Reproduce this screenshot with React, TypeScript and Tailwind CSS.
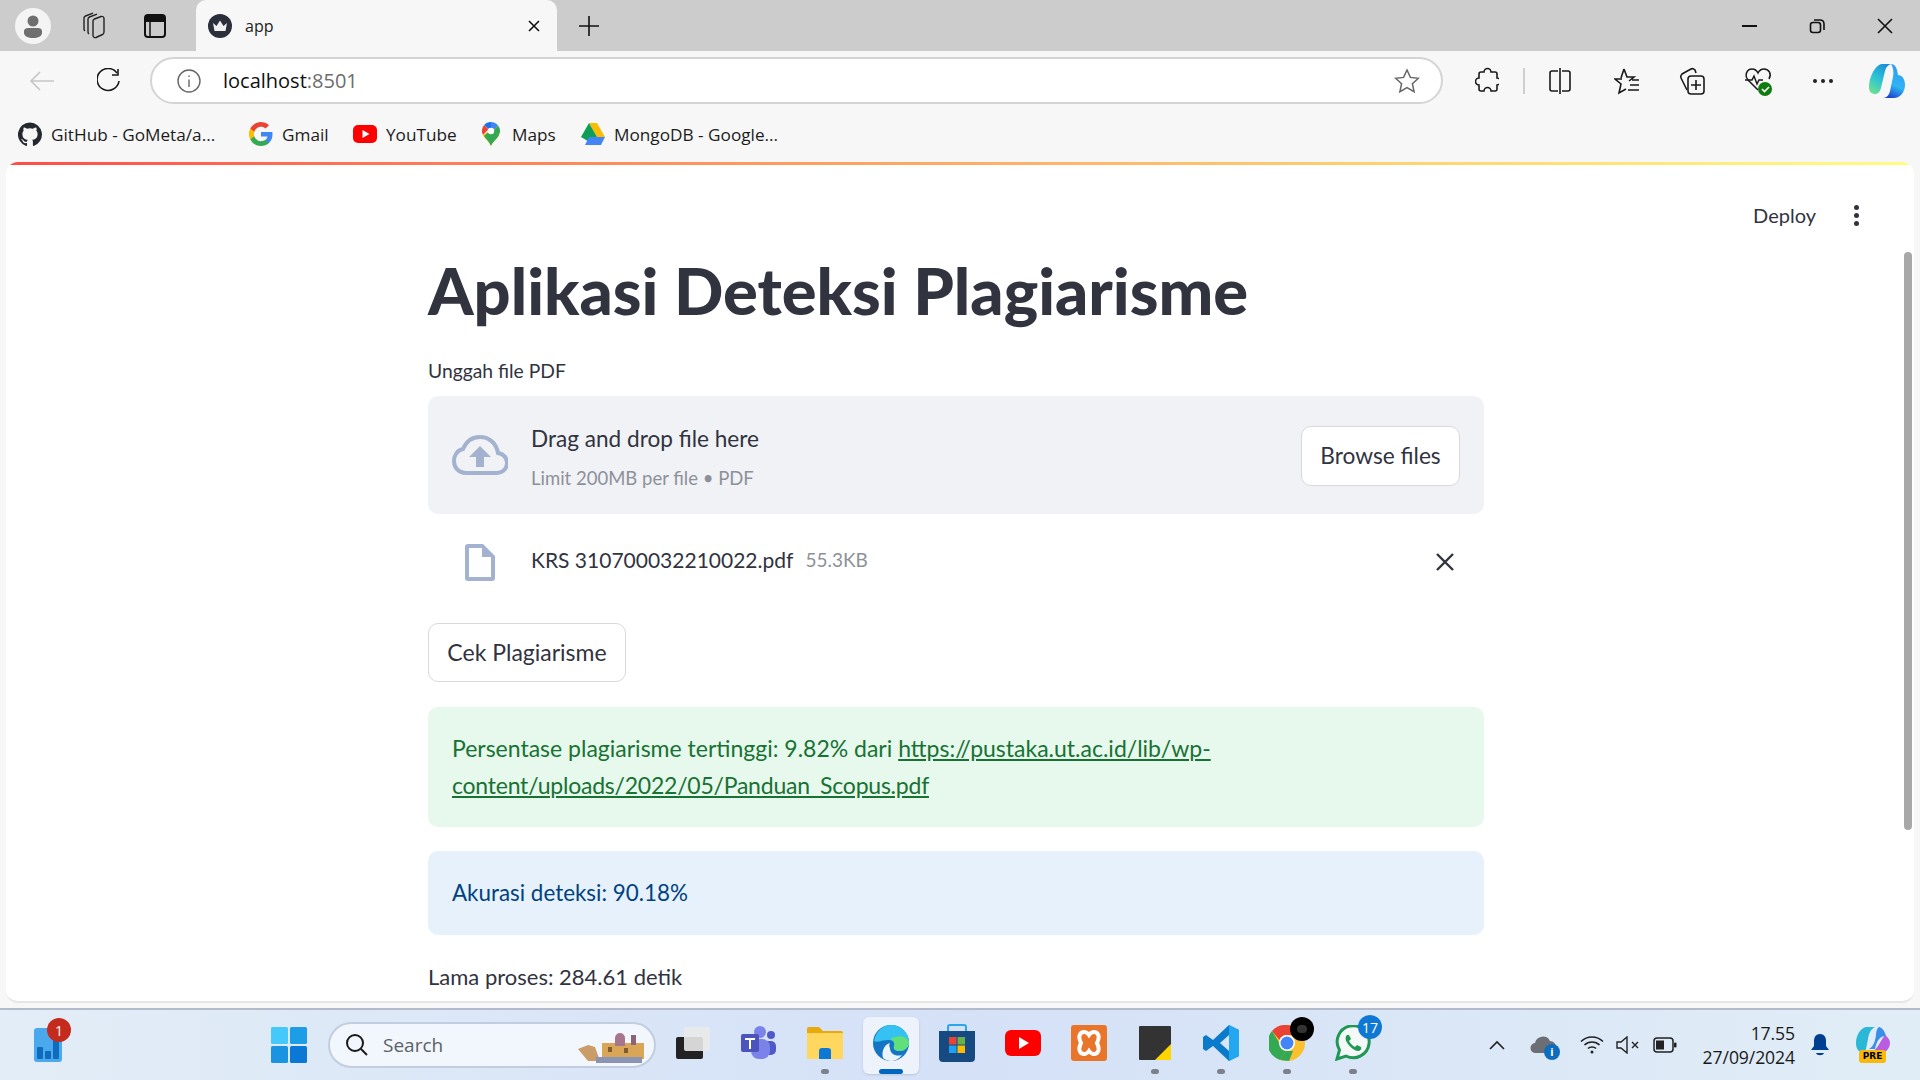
import type { ReactNode } from 'react';

const ui = "font-['Open_Sans','Noto_Sans',sans-serif]";
const st = "font-['Lato','Noto_Sans',sans-serif]";

function Slot({ w, className = '', children }: { w: string; className?: string; children: ReactNode }) {
  return <div className={`flex shrink-0 items-center justify-center ${w} ${className}`}>{children}</div>;
}

function TabStrip() {
  return (
    <div className="flex h-[51px] shrink-0 items-center bg-[#cccccc]">
      <Slot w="w-[66px]">
        <div className="flex h-9 w-9 items-center justify-center rounded-full bg-[#f4f4f4]">
          <svg width="22" height="26" viewBox="0 0 22 26" fill="#6f6f6f">
            <circle cx="11" cy="8" r="5.5" />
            <path d="M2 18c0-2 2-3 4-3h10c2 0 4 1 4 3v2c0 3-4 5-9 5s-9-2-9-5z" />
          </svg>
        </div>
      </Slot>
      <Slot w="w-[62px]" className="-ml-[4px]">
        <svg width="26" height="28" viewBox="0 0 26 28" fill="none" stroke="#222" strokeWidth="1.4">
          <path d="M13 9c0-1 .5-1.500 1.500-2L21 4.500c1.500-.5 3 .5 3 2V20c0 1-.5 2-1.500 2.500L16 25.500c-1.500.5-3-.5-3-2z" />
          <path d="M9 22c-.7-.5-1-1.200-1-2V7c0-1 .5-1.500 1.500-2L17 2.200" />
          <path d="M5 19c-.7-.5-1-1.200-1-2V6c0-1 .5-1.500 1.500-2L13 1.200" />
        </svg>
      </Slot>
      <Slot w="w-[62px]">
        <svg width="24" height="26" viewBox="0 0 24 26" fill="none">
          <rect x="2" y="2" width="20" height="22" rx="3" stroke="#111" strokeWidth="2" />
          <path d="M2 5a3 3 0 013-3h14a3 3 0 013 3v4H2z" fill="#111" />
          <path d="M7 9v15" stroke="#111" strokeWidth="1.5" />
        </svg>
      </Slot>
      <div className="ml-[10px] flex h-full w-[361px] shrink-0 items-center rounded-t-[10px] bg-[#f7f7f7] pl-[12px]">
        <svg width="24" height="24" viewBox="0 0 24 24">
          <circle cx="12" cy="12" r="12" fill="#2b2f3b" />
          <path d="M5 9l3.5 3L12 6.5l3.5 5.500L19 9l-1.500 8h-11z" fill="#f0f0f0" />
        </svg>
        <span className={`${ui} ml-[13px] text-[16px] text-[#222]`}>app</span>
        <svg className="ml-auto mr-[16px]" width="14" height="14" viewBox="0 0 14 14" stroke="#111" strokeWidth="1.6">
          <path d="M2 2l10 10M12 2L2 12" />
        </svg>
      </div>
      <Slot w="w-[66px]" className="-ml-[1px]">
        <svg width="22" height="22" viewBox="0 0 22 22" stroke="#111" strokeWidth="1.6">
          <path d="M11 1v20M1 11h20" />
        </svg>
      </Slot>
      <div className="ml-auto flex items-center">
        <Slot w="w-[68px]">
          <div className="h-[2px] w-[15px] bg-[#111]" />
        </Slot>
        <Slot w="w-[68px]">
          <svg width="16" height="16" viewBox="0 0 16 16" fill="none" stroke="#111" strokeWidth="1.6">
            <rect x="1.500" y="4.500" width="10" height="10" rx="2.500" />
            <path d="M5 2h6c2.500 0 4 1.500 4 4v6" />
          </svg>
        </Slot>
        <Slot w="w-[68px]" className="mr-[1px]">
          <svg width="16" height="16" viewBox="0 0 16 16" stroke="#111" strokeWidth="1.6">
            <path d="M1 1l14 14M15 1L1 15" />
          </svg>
        </Slot>
      </div>
    </div>
  );
}

function CopilotMark() {
  return (
    <svg width="36" height="34" viewBox="0 0 36 34">
      <defs>
        <linearGradient id="copL" x1="0.700" y1="0" x2="0.200" y2="1">
          <stop offset="0" stopColor="#1b8fd8" />
          <stop offset="0.500" stopColor="#2cc3d6" />
          <stop offset="1" stopColor="#6ee08f" />
        </linearGradient>
        <linearGradient id="copR" x1="0.600" y1="0" x2="0.300" y2="1">
          <stop offset="0" stopColor="#2f9cf0" />
          <stop offset="0.600" stopColor="#30b4f2" />
          <stop offset="1" stopColor="#1a3fd0" />
        </linearGradient>
      </defs>
      <path d="M10 1c1-.7 2-1 3-1h9c-3 1-5 3-6 7l-4 17c-1 4-3 6-6 6-3.500 0-6-2-6-7 0-8 4-18 10-22z" fill="url(#copL)" />
      <path d="M22 0c3 0 5 2 6 6l1 5c4 0 7 4 7 10 0 7-5 13-11 13H14c4 0 6-3 7-7l3-14c1-5 0-10-2-13z" fill="url(#copR)" />
    </svg>
  );
}

function Toolbar() {
  const black = { fill: 'none', stroke: '#1a1a1a', strokeWidth: 1.6 };
  return (
    <div className="flex h-[56px] shrink-0 items-center bg-[#f7f7f7] pt-[3px]">
      <Slot w="w-[84px]">
        <svg width="26" height="22" viewBox="0 0 26 22" fill="none" stroke="#c6c6c6" strokeWidth="1.6">
          <path d="M25 11H2M11 2l-9 9 9 9" />
        </svg>
      </Slot>
      <Slot w="w-[48px]" className="pl-[4px]">
        <svg width="26" height="26" viewBox="0 0 26 26" {...black}>
          <path d="M20 5a11 11 0 102 8" />
          <path d="M21 1v6h-6" />
        </svg>
      </Slot>
      <div className="ml-[18px] flex h-[47px] w-[1293px] shrink-0 items-center rounded-full border-2 border-[#d4d4d4] bg-white pl-[25px]">
        <svg width="24" height="24" viewBox="0 0 24 24" fill="none" stroke="#666" strokeWidth="1.4">
          <circle cx="12" cy="12" r="11" />
          <path d="M12 10.500V18M12 6.500v1.500" />
        </svg>
        <span className={`${ui} ml-[22px] text-[20px] text-[#111]`}>
          localhost<span className="text-[#6d6d6d]">:8501</span>
        </span>
        <svg className="ml-auto mr-[21px]" width="26" height="26" viewBox="0 0 26 26" fill="none" stroke="#666" strokeWidth="1.5">
          <path d="M13 2l3.400 7.400 8 .9-6 5.400 1.700 8L13 19.700 5.900 23.700l1.700-8-6-5.400 8-.9z" />
        </svg>
      </div>
      <Slot w="w-[88px]">
        <svg width="24" height="28" viewBox="0 0 24 28" {...black}>
          <path d="M9 5a3.500 3.500 0 017 0h4c1 0 2 1 2 2v4a3.500 3.500 0 010 7v4c0 1-1 2-2 2h-4a3.500 3.500 0 00-7 0H6c-1 0-2-1-2-2v-4a3.500 3.500 0 010-7V7c0-1 1-2 2-2z" />
        </svg>
      </Slot>
      <div className="-ml-[8px] h-[26px] w-[2px] bg-[#cfcfcf]" />
      <Slot w="w-[70px]">
        <svg width="24" height="28" viewBox="0 0 24 28" {...black}>
          <path d="M10 4H4a2 2 0 00-2 2v16a2 2 0 002 2h6M14 4h6a2 2 0 012 2v16a2 2 0 01-2 2h-6M12 1v26" />
        </svg>
      </Slot>
      <Slot w="w-[64px]">
        <svg width="26" height="28" viewBox="0 0 26 28" {...black}>
          <path d="M10 2l3 8h7l-5 4M8 12H1l6 5-2 9 7-4M18 13h7M16 18h9M14 23h11" />
          <path d="M10 2L7 11" />
        </svg>
      </Slot>
      <Slot w="w-[66px]">
        <svg width="26" height="30" viewBox="0 0 26 30" {...black}>
          <rect x="9" y="10" width="16" height="18" rx="3" />
          <path d="M17 14v10M12 19h10M8 24L2 12c-1-2 0-3 1-4l9-5c2-1 3 0 4 1l1 3" />
        </svg>
      </Slot>
      <Slot w="w-[66px]" className="pl-[1px]">
        <svg width="30" height="30" viewBox="0 0 30 30">
          <path d="M14 24L4 14C0 9 3 3 8 3c3 0 5 2 6 4 1-2 3-4 6-4 5 0 8 5 5 10" fill="none" stroke="#1a1a1a" strokeWidth="1.500" />
          <path d="M1 14h7l2-4 3 8 2-4h4" fill="none" stroke="#1a1a1a" strokeWidth="1.500" />
          <circle cx="21" cy="23" r="7" fill="#107c10" />
          <path d="M18 23l2.500 2.500L25 21" fill="none" stroke="#fff" strokeWidth="1.600" />
        </svg>
      </Slot>
      <Slot w="w-[64px]">
        <div className="flex gap-[4px]">
          <div className="h-[4px] w-[4px] rounded-full bg-[#222]" />
          <div className="h-[4px] w-[4px] rounded-full bg-[#222]" />
          <div className="h-[4px] w-[4px] rounded-full bg-[#222]" />
        </div>
      </Slot>
      <Slot w="w-[64px]">
        <CopilotMark />
      </Slot>
    </div>
  );
}

function Bookmark({ icon, label, className, gap = 'ml-[9px]' }: { icon: ReactNode; label: string; className: string; gap?: string }) {
  return (
    <div className={`flex shrink-0 items-center ${className}`}>
      {icon}
      <span className={`${ui} ${gap} whitespace-nowrap text-[17.200px] text-[#1c1c1c]`}>{label}</span>
    </div>
  );
}

function BookmarksBar() {
  return (
    <div className="flex h-[55px] shrink-0 items-center bg-[#f7f7f7] pl-[18px]">
      <Bookmark
        className="w-[231px]"
        label="GitHub - GoMeta/a..."
        icon={
          <svg width="24" height="24" viewBox="0 0 24 24" fill="#24292f">
            <path d="M12 .5a12 12 0 00-3.800 23.400c.6.1.8-.3.8-.6v-2.200c-3.300.7-4-1.400-4-1.400-.5-1.400-1.300-1.800-1.300-1.800-1.100-.7.1-.7.1-.7 1.200.1 1.800 1.200 1.800 1.200 1.100 1.800 2.800 1.300 3.500 1 .1-.8.4-1.300.8-1.600-2.700-.3-5.500-1.300-5.500-5.900 0-1.300.5-2.400 1.200-3.200-.1-.3-.5-1.500.1-3.200 0 0 1-.3 3.300 1.200a11.500 11.500 0 016 0c2.300-1.500 3.300-1.200 3.300-1.200.6 1.700.2 2.900.1 3.200.8.800 1.200 1.900 1.200 3.200 0 4.600-2.800 5.600-5.500 5.900.4.400.8 1.100.8 2.200v3.300c0 .3.2.7.8.6A12 12 0 0012 .5z" />
          </svg>
        }
      />
      <Bookmark
        className="w-[104px]"
        label="Gmail"
        icon={
          <svg width="24" height="24" viewBox="0 0 24 24">
            <path d="M23.500 12.300c0-.8-.1-1.600-.2-2.300H12v4.500h6.500a5.500 5.500 0 01-2.400 3.600v3h3.900c2.200-2.100 3.500-5.100 3.500-8.800z" fill="#4285f4" />
            <path d="M12 24c3.200 0 6-1.100 8-2.900l-3.900-3c-1.100.7-2.500 1.200-4.100 1.200-3.100 0-5.800-2.100-6.700-5H1.300v3.100A12 12 0 0012 24z" fill="#34a853" />
            <path d="M5.300 14.300a7 7 0 010-4.600V6.600h-4a12 12 0 000 10.800z" fill="#fbbc05" />
            <path d="M12 4.800c1.800 0 3.300.6 4.600 1.800l3.400-3.400A12 12 0 001.300 6.600l4 3.100c.9-2.800 3.600-4.900 6.700-4.900z" fill="#ea4335" />
          </svg>
        }
      />
      <Bookmark
        className="w-[126px]"
        label="YouTube"
        icon={
          <svg width="24" height="18" viewBox="0 0 24 18">
            <rect width="24" height="18" rx="5" fill="#ff0000" />
            <path d="M9.500 5v8l7-4z" fill="#fff" />
          </svg>
        }
      />
      <Bookmark
        className="w-[102px] pl-[3px]"
        gap="ml-[12px]"
        label="Maps"
        icon={
          <svg width="18" height="24" viewBox="0 0 18 24">
            <path d="M9 0a9 9 0 00-7 3.300l4.600 3.800A3.200 3.200 0 019 6z" fill="#1a73e8" />
            <path d="M2 3.300A9 9 0 001 13l5.500-5.700z" fill="#ea4335" />
            <path d="M9 0c3 0 5.500 1.500 7 3.500L12 8a3.200 3.200 0 00-3-2z" fill="#4285f4" />
            <path d="M16 3.500A9 9 0 0117 13l-11 0 6-5z" fill="#34a853" />
            <path d="M1 13c2 4 6 6 8 11 2-5 6-7 8-11-2-2-9-3-11-3z" fill="#fbbc04" />
            <path d="M9 24c-2-5-5-7-7-10l7-6 8 5c-2 4-6 6-8 11z" fill="#34a853" />
            <circle cx="9" cy="9" r="3.200" fill="#fff" />
          </svg>
        }
      />
      <Bookmark
        className="pl-[0px]"
        label="MongoDB - Google..."
        icon={
          <svg width="24" height="22" viewBox="0 0 24 22">
            <path d="M8 0h8l8 14h-8z" fill="#fbbc04" />
            <path d="M8 0l8 14-4 7L0 14z" fill="#0f9d58" />
            <path d="M8 14h16l-4 8H4z" fill="#4285f4" />
          </svg>
        }
      />
    </div>
  );
}

function Card() {
  return (
    <div className="relative mx-[6px] h-[841px] shrink-0 overflow-hidden rounded-[12px] border-b-2 border-[#e6e6e6] bg-white">
      <div className="h-[3px] bg-gradient-to-r from-[#ff4b4b] to-[#fffd80]" />
      <div className="flex h-[75px] items-end justify-end pb-[9px] pr-[55px]">
        <span className={`${st} text-[20px] leading-[32px] text-[#31333f]`}>Deploy</span>
        <div className="ml-[38px] flex h-[32px] flex-col items-center justify-center gap-[3px]">
          <div className="h-[5px] w-[5px] rounded-full bg-[#31333f]" />
          <div className="h-[5px] w-[5px] rounded-full bg-[#31333f]" />
          <div className="h-[5px] w-[5px] rounded-full bg-[#31333f]" />
        </div>
      </div>
      <div className={`${st} ml-[422px] w-[1056px] text-[#31333f]`}>
        <h1 className="mt-[12px] h-[76px] whitespace-nowrap text-[65px] font-black leading-[76px]">Aplikasi Deteksi Plagiarisme</h1>
        <div className="mt-[31px] text-[19.300px] leading-[24px]">Unggah file PDF</div>
        <div className="mt-[13px] flex h-[118px] items-center rounded-[10px] bg-[#f0f2f6] pl-[24px] pr-[24px]">
          <svg width="56" height="42" viewBox="0 0 56 42" fill="none">
            <path d="M14 39h30a10 10 0 002-20C44 8 36 3 28 3 20 3 14 8 11 15 5 16 2 22 2 27c0 7 5 12 12 12z" stroke="#a3b2cf" strokeWidth="4" />
            <path d="M28 12l-11 11h7v10h8V23h7z" fill="#a3b2cf" />
          </svg>
          <div className="ml-[23px]">
            <div className="text-[22.600px] leading-[38px]">Drag and drop file here</div>
            <div className="mt-[8px] text-[18.500px] leading-[24px] text-[#8e9099]">Limit 200MB per file • PDF</div>
          </div>
          <button className="ml-auto mt-[2px] h-[60px] w-[159px] rounded-[10px] border border-[#d8d9dc] bg-white text-[22.700px]">Browse files</button>
        </div>
        <div className="mt-[16px] flex h-[64px] items-center pl-[37px]">
          <svg width="30" height="37" viewBox="0 0 30 37">
            <path d="M3 0h15l12 12v22a3 3 0 01-3 3H3a3 3 0 01-3-3V3a3 3 0 013-3z" fill="#a3b2cf" />
            <path d="M4 4h13v9h9v20H4z" fill="#fff" />
          </svg>
          <span className="ml-[36px] -mt-[4px] text-[21px]">KRS 310700032210022.pdf</span>
          <span className="ml-[12px] -mt-[4px] text-[19px] text-[#8e9099]">55.3KB</span>
          <svg className="ml-auto mr-[30px]" width="18" height="18" viewBox="0 0 18 18" stroke="#31333f" strokeWidth="2.400">
            <path d="M1 1l16 16M17 1L1 17" />
          </svg>
        </div>
        <button className="mt-[29px] block h-[59px] w-[198px] rounded-[10px] border border-[#d8d9dc] bg-white text-[23px]">Cek Plagiarisme</button>
        <div className="mt-[25px] h-[120px] whitespace-nowrap rounded-[10px] bg-[#e7f8ed] px-[24px] py-[23px] text-[23px] leading-[37px] text-[#177233]">
          Persentase plagiarisme tertinggi: 9.82% dari <a className="underline">https://pustaka.ut.ac.id/lib/wp-<br /><span className="tracking-[-0.23px]">content/uploads/2022/05/Panduan_Scopus.pdf</span></a>
        </div>
        <div className="mt-[24px] flex h-[84px] items-center rounded-[10px] bg-[#e7f1fc] px-[24px] text-[22.400px] text-[#004280]">Akurasi deteksi: 90.18%</div>
        <div className="mt-[24px] text-[22px] leading-[36px]">Lama proses: 284.61 detik</div>
      </div>
      <div className="absolute right-[2px] top-[90px] h-[578px] w-[8px] rounded-full bg-[#a8a8a8]" />
    </div>
  );
}

function TaskIcon({ children, dot, active }: { children: ReactNode; dot?: boolean; active?: boolean }) {
  return (
    <div className={`relative mx-[5px] flex h-[57px] w-[56px] shrink-0 items-center justify-center rounded-[6px] pb-[4px] ${active ? 'bg-[#eef3fb] shadow-sm' : ''}`}>
      {children}
      {dot && <div className="absolute bottom-[0px] left-[24px] h-[5px] w-[8px] rounded-full bg-[#7a808c]" />}
      {active && <div className="absolute bottom-[0px] left-[16px] h-[5px] w-[24px] rounded-full bg-[#0067c0]" />}
    </div>
  );
}

function Badge({ children, className }: { children: ReactNode; className: string }) {
  return (
    <div className={`absolute flex items-center justify-center rounded-full text-white ${ui} ${className}`}>{children}</div>
  );
}

function Taskbar() {
  return (
    <div className="mt-[5px] flex h-[72px] flex-1 items-center border-t-2 border-[#b3bbca] bg-gradient-to-r from-[#e3edf7] via-[#d4e1f7] to-[#e1edf6]">
      {/* widgets */}
      <div className="relative ml-[34px] flex h-[34px] w-[28px] items-end justify-center gap-[2px] rounded-[3px] bg-[#4aa8ec] pb-[3px]">
        <div className="h-[12px] w-[6px] rounded-[1px] bg-[#0f6cbd]" />
        <div className="h-[8px] w-[6px] rounded-[1px] bg-[#0f6cbd]" />
        <div className="h-[20px] w-[6px] rounded-[1px] bg-[#0f6cbd]" />
        <Badge className="-right-[9px] -top-[10px] h-[24px] w-[24px] bg-[#c42b1c] text-[14px]">1</Badge>
      </div>
      {/* start */}
      <svg className="ml-[209px]" width="36" height="36" viewBox="0 0 36 36">
        <rect width="17" height="17" rx="1.500" fill="#45c8fa" />
        <rect x="19" width="17" height="17" rx="1.500" fill="#1d9de6" />
        <rect y="19" width="17" height="17" rx="1.500" fill="#1a94e0" />
        <rect x="19" y="19" width="17" height="17" rx="1.500" fill="#0a78d4" />
      </svg>
      {/* search */}
      <div className="relative ml-[21px] flex h-[46px] w-[328px] shrink-0 items-center rounded-full border-2 border-[#c2cde0] bg-[#f2f6fd] pl-[15px]">
        <svg width="24" height="24" viewBox="0 0 24 24" fill="none" stroke="#1a1a1a" strokeWidth="2">
          <circle cx="10" cy="10" r="8" />
          <path d="M16 16l6 6" />
        </svg>
        <span className={`${ui} ml-[14px] text-[19px] text-[#5d6168]`}>Search</span>
        <svg className="ml-auto mr-[2px]" width="76" height="36" viewBox="0 0 76 36">
          <path d="M2 22l10-4 7 2 5 14H12z" fill="#c99c68" />
          <rect x="26" y="16" width="42" height="16" fill="#d9a657" />
          <rect x="20" y="30" width="46" height="6" fill="#8c94b4" />
          <circle cx="44" cy="11" r="5" fill="#a8758f" />
          <rect x="39" y="11" width="10" height="8" fill="#a8758f" />
          <rect x="55" y="8" width="5" height="10" fill="#8a6478" />
          <rect x="32" y="20" width="4" height="5" fill="#7f5a33" />
          <rect x="48" y="21" width="4" height="5" fill="#7f5a33" />
        </svg>
      </div>
      {/* pinned */}
      <div className="ml-[4px] flex items-center">
        <TaskIcon>
          <svg width="38" height="36" viewBox="0 0 38 36">
            <rect x="2" y="12" width="27" height="22" rx="2" fill="#222" />
            <rect x="10" y="2" width="26" height="24" rx="2" fill="#e9e9e9" opacity="0.9" />
          </svg>
        </TaskIcon>
        <TaskIcon>
          <svg width="38" height="36" viewBox="0 0 38 36">
            <circle cx="31" cy="10" r="4" fill="#5059c9" />
            <rect x="24" y="16" width="12" height="14" rx="5" fill="#5059c9" />
            <circle cx="20" cy="7" r="6" fill="#7b83eb" />
            <rect x="11" y="14" width="19" height="20" rx="8" fill="#7b83eb" />
            <rect x="1" y="9" width="18" height="18" rx="2" fill="#4b53bc" />
            <path d="M5 13h10v2h-4v9H9v-9H5z" fill="#fff" />
          </svg>
        </TaskIcon>
        <TaskIcon dot>
          <svg width="36" height="32" viewBox="0 0 36 32">
            <path d="M0 2a2 2 0 012-2h10l4 4h18a2 2 0 012 2v24H0z" fill="#e8a90c" />
            <path d="M0 6h36v26H0z" fill="#ffd75e" />
            <path d="M12 32v-8a3 3 0 013-3h6a3 3 0 013 3v8z" fill="#0f78d4" />
          </svg>
        </TaskIcon>
        <TaskIcon active>
          <svg width="38" height="38" viewBox="0 0 38 38">
            <circle cx="19" cy="19" r="18" fill="#1475c4" />
            <path d="M2 17C4 7 11 1 19 1c10 0 18 8 18 17 0 6-5 9-9 9-5 0-7-2-6-5 1-2 0-6-5-6-7 0-12 3-15 1z" fill="#35c1f1" />
            <path d="M37 18c0 6-5 9-9 9-5 0-7-2-6-5 1-2 0-6-4-7 9-5 17-3 19 3z" fill="#5fe07b" />
            <path d="M18 24c0 6 6 9 12 7-3 4-7 6-11 6-3 0-6-1-8-3-2-7 2-14 7-15-1 2-1 3 0 5z" fill="#eaf4fb" />
          </svg>
        </TaskIcon>
        <TaskIcon>
          <svg width="36" height="38" viewBox="0 0 36 38">
            <path d="M9 8V3a2 2 0 012-2h14a2 2 0 012 2v5" fill="none" stroke="#28a8ea" strokeWidth="2" />
            <path d="M0 7h36v27a4 4 0 01-4 4H4a4 4 0 01-4-4z" fill="#164a80" />
            <rect x="10" y="13" width="7.500" height="7.500" fill="#ea4335" />
            <rect x="18.500" y="13" width="7.500" height="7.500" fill="#6ab04c" />
            <rect x="10" y="21.500" width="7.500" height="7.500" fill="#1da1f2" />
            <rect x="18.500" y="21.500" width="7.500" height="7.500" fill="#fbbc04" />
          </svg>
        </TaskIcon>
        <TaskIcon>
          <svg width="36" height="26" viewBox="0 0 36 26">
            <rect width="36" height="26" rx="6" fill="#ff0000" />
            <path d="M14 7v12l10-6z" fill="#fff" />
          </svg>
        </TaskIcon>
        <TaskIcon>
          <svg width="36" height="36" viewBox="0 0 36 36">
            <rect width="36" height="36" rx="3" fill="#e8752a" />
            <path d="M10 8c3-2 6-1 8 2 2-3 5-4 8-2 3 3 2 6 0 10 2 4 3 7 0 10-3 2-6 1-8-2-2 3-5 4-8 2-3-3-2-6 0-10-2-4-3-7 0-10z" fill="none" stroke="#fff" strokeWidth="4" />
          </svg>
        </TaskIcon>
        <TaskIcon dot>
          <svg width="32" height="34" viewBox="0 0 32 34">
            <rect width="32" height="34" rx="1" fill="#333" />
            <path d="M32 18L16 34h16z" fill="#ffd500" />
          </svg>
        </TaskIcon>
        <TaskIcon dot>
          <svg width="36" height="36" viewBox="0 0 36 36">
            <path d="M26 0l10 5v26l-10 5L10 21l-7 5-3-2V12l3-2 7 5zm0 10l-9 8 9 8z" fill="#0a7acb" />
            <path d="M26 0l10 5v26l-10 5z" fill="#22a7f0" />
          </svg>
        </TaskIcon>
        <TaskIcon dot>
          <div className="relative">
            <svg width="36" height="36" viewBox="0 0 36 36">
              <circle cx="18" cy="18" r="18" fill="#fbc02d" />
              <path d="M18 0a18 18 0 0116 10H18a8 8 0 00-7.500 5L3 6A18 18 0 0118 0z" fill="#ea4335" />
              <path d="M3 6l8 13 6 7-6 9A18 18 0 013 6z" fill="#34a853" />
              <path d="M11 35l6-9h7l-4 10z" fill="#34a853" />
              <circle cx="18" cy="18" r="8" fill="#fff" />
              <circle cx="18" cy="18" r="6.500" fill="#4285f4" />
            </svg>
            <div className="absolute -right-[9px] -top-[8px] flex h-[24px] w-[24px] items-center justify-center rounded-full bg-black">
              <div className="h-[8px] w-[10px] rounded-full bg-[#333]" />
            </div>
          </div>
        </TaskIcon>
        <TaskIcon dot>
          <div className="relative">
            <svg width="36" height="36" viewBox="0 0 36 36" fill="none">
              <path d="M2 34l2.500-9A16 16 0 1111 31z" stroke="#1f9855" strokeWidth="3" fill="#f4f8f6" />
              <path d="M12 10c-2 2-2 5 1 9s7 7 10 7c2 0 4-2 3-4l-4-2-2 2c-2-1-5-4-6-6l2-2-2-4z" fill="#1f9855" />
            </svg>
            <Badge className="-right-[11px] -top-[10px] h-[24px] w-[24px] bg-[#0f78d4] text-[14px]">17</Badge>
          </div>
        </TaskIcon>
      </div>
      {/* tray */}
      <div className="ml-auto flex items-center">
        <svg width="16" height="10" viewBox="0 0 16 10" fill="none" stroke="#222" strokeWidth="1.600">
          <path d="M1 9l7-7 7 7" />
        </svg>
        <div className="relative ml-[25px] h-[24px] w-[26px]">
          <svg width="26" height="22" viewBox="0 0 26 22">
            <path d="M6 20a5 5 0 01-1-10 8 8 0 0115-2 6 6 0 010 12z" fill="#6b6f75" />
          </svg>
          <Badge className="-right-[4px] -bottom-[3px] h-[16px] w-[16px] bg-[#0f6cbd] text-[11px] font-bold">i</Badge>
        </div>
        <svg className="ml-[24px]" width="24" height="20" viewBox="0 0 24 20" fill="none" stroke="#222" strokeWidth="1.600">
          <path d="M1 6.500c6-6 16-6 22 0M4.500 10c4-4 11-4 15 0M8 13.500c2-2 6-2 8 0" />
          <circle cx="12" cy="17" r="1.500" fill="#222" stroke="none" />
        </svg>
        <svg className="ml-[12px]" width="24" height="18" viewBox="0 0 24 18" fill="none" stroke="#222" strokeWidth="1.400">
          <path d="M1 6h4l6-5v16l-6-5H1zM16 6l6 6M22 6l-6 6" />
        </svg>
        <svg className="ml-[13px]" width="24" height="16" viewBox="0 0 24 16" fill="none">
          <rect x="1" y="1" width="19" height="14" rx="3" stroke="#222" strokeWidth="1.500" />
          <rect x="3" y="3.500" width="8" height="9" fill="#222" />
          <rect x="21" y="5.500" width="2.500" height="5" rx="1" fill="#222" />
        </svg>
        <div className={`${ui} ml-[12px] w-[106px] text-right text-[17.600px] leading-[24px] tracking-[-0.1px] text-[#1a1a1a]`}>
          <div>17.55</div>
          <div>27/09/2024</div>
        </div>
        <svg className="ml-[15px]" width="20" height="24" viewBox="0 0 20 24" fill="#003e92">
          <path d="M10 1c4 0 6 3 6 7v5l3 4H1l3-4V8c0-4 2-7 6-7z" />
          <path d="M6 20h8c-1 3-7 3-8 0z" />
        </svg>
        <div className="relative ml-[26px] mr-[30px] h-[36px] w-[34px]">
          <svg width="34" height="28" viewBox="0 0 34 28">
            <path d="M11 0h8c-4 2-6 6-7 12l-2 10c-1 2-3 4-5 3-3-1-5-4-5-9C0 8 5 0 11 0z" fill="#2bb7d6" />
            <path d="M23 0c4 1 6 5 7 9-6 0-9 4-11 13h-6c5-3 6-8 7-14 0-3 1-7 3-8z" fill="#3a8fe8" />
            <path d="M29 8c3 2 5 5 5 8 0 5-4 10-10 10h-9c6-3 8-10 14-18z" fill="#b95ce0" />
          </svg>
          <div className="absolute bottom-[0px] left-[3px] flex h-[13px] w-[27px] items-center justify-center rounded-[3px] bg-[#f8b90c] font-['DejaVu_Sans',sans-serif] text-[9px] font-bold leading-none text-black">PRE</div>
        </div>
      </div>
    </div>
  );
}

export default function App() {
  return (
    <div className="flex h-[1080px] w-[1920px] flex-col overflow-hidden bg-[#f7f7f7]">
      <TabStrip />
      <Toolbar />
      <BookmarksBar />
      <Card />
      <Taskbar />
    </div>
  );
}
